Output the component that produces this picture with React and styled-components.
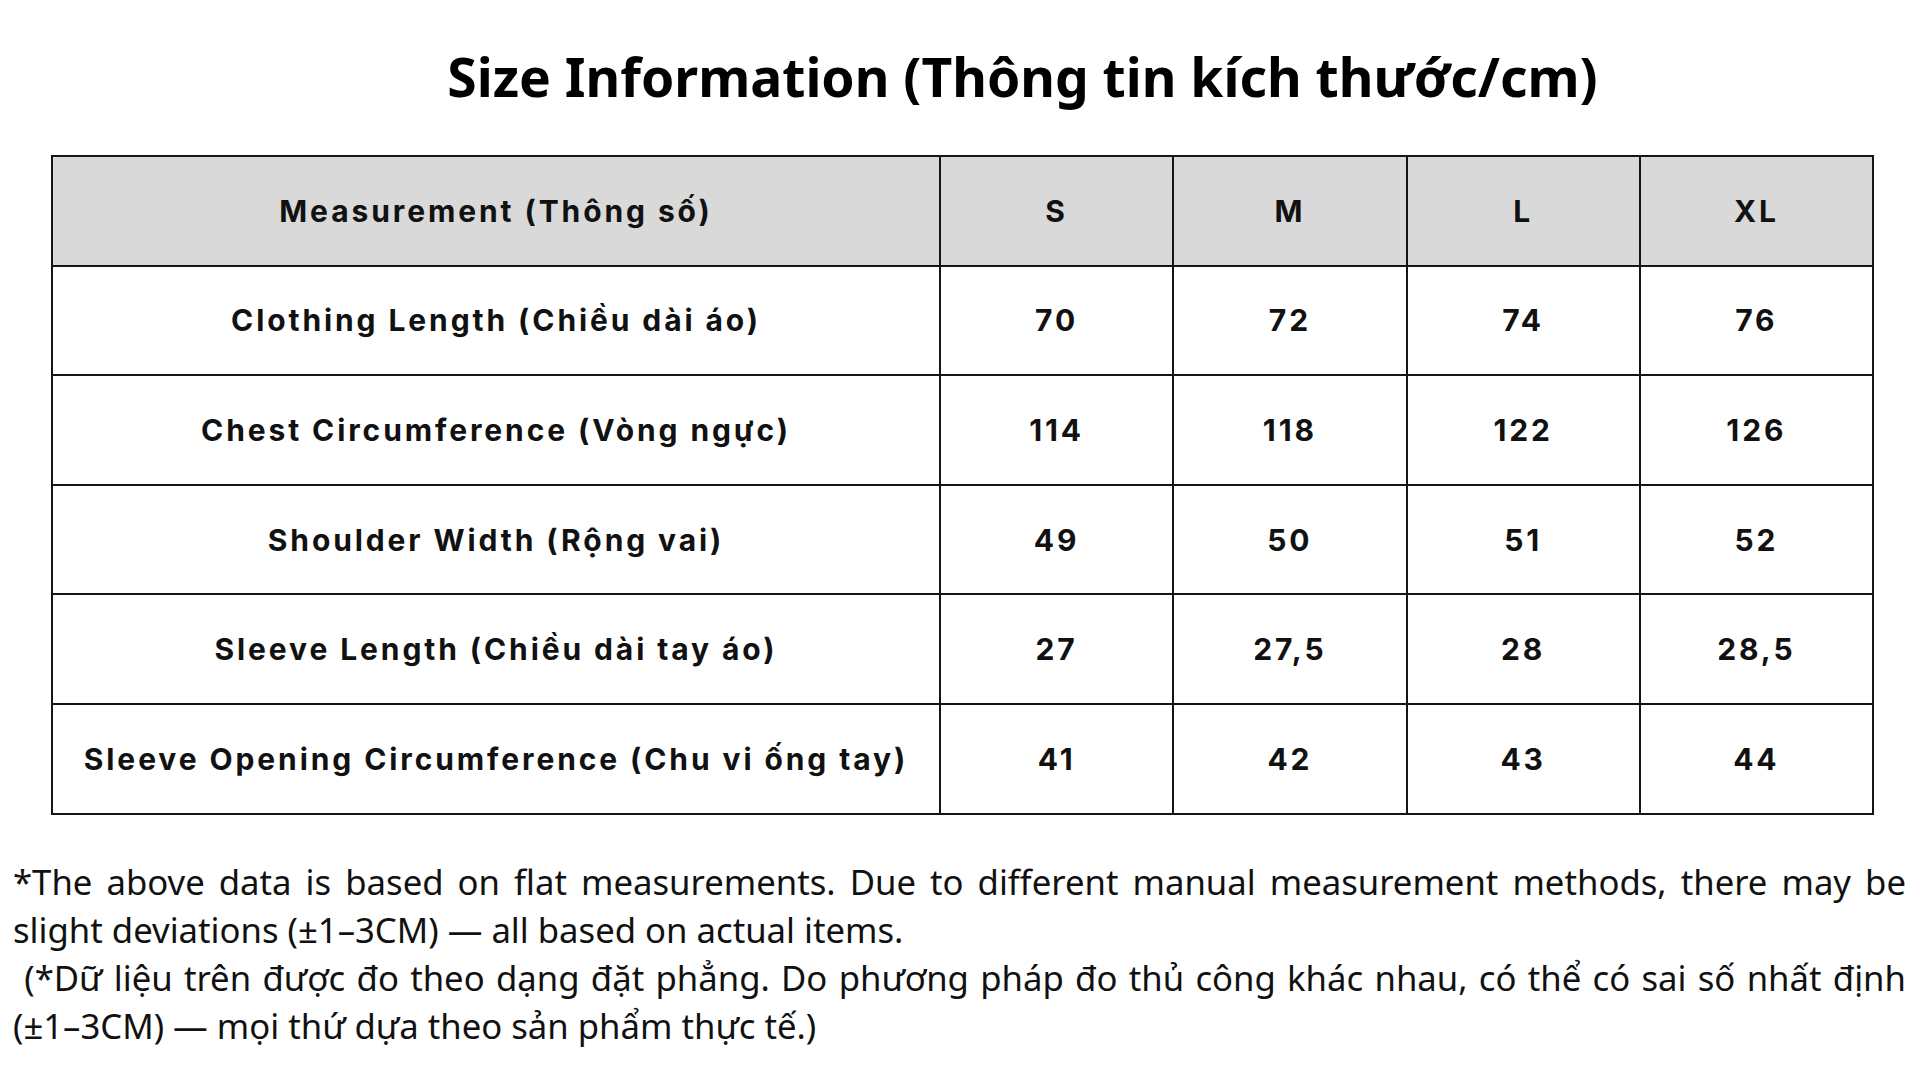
import styled, { createGlobalStyle } from "styled-components";

const GlobalStyle = createGlobalStyle`
  html, body {
    margin: 0;
    padding: 0;
    background: #ffffff;
  }
  body {
    width: 1920px;
    height: 1080px;
    overflow: hidden;
  }
`;

const StyledPage = styled.div`
  padding: 0 14px 0 13px;
  box-sizing: border-box;
  width: 1920px;
  color: #000;
`;

const StyledTitle = styled.h1`
  margin: 0;
  padding: 44px 0 0 126px;
  height: 155px;
  box-sizing: border-box;
  text-align: center;
  font-family: "Noto Sans", "Open Sans", sans-serif;
  font-weight: 700;
  font-size: 53.4px;
  line-height: 65px;
`;

const StyledTable = styled.table`
  border-collapse: collapse;
  margin: 0 32px 0 38px;
  width: calc(100% - 70px);
  table-layout: fixed;
  font-family: Inter, "Noto Sans", sans-serif;
  font-weight: 700;
  font-size: 30px;
  color: #111;
`;

const StyledCell = styled.td`
  border: 2px solid #151515;
  height: 107.6px;
  padding: 0;
  text-align: center;
  vertical-align: middle;
  background-color: ${(props) => (props.$head ? "#d9d9d9" : "#ffffff")};
  letter-spacing: 2.9px;
`;

const StyledNote = styled.p`
  margin: 0;
  padding-top: 43px;
  font-family: "Noto Sans", "Open Sans", sans-serif;
  font-size: 34.7px;
  line-height: 48px;
  text-align: justify;
  color: #111;
`;

const sizes = ["S", "M", "L", "XL"];

const rows = [
  { name: "Clothing Length (Chiều dài áo)", values: ["70", "72", "74", "76"] },
  { name: "Chest Circumference (Vòng ngực)", values: ["114", "118", "122", "126"] },
  { name: "Shoulder Width (Rộng vai)", values: ["49", "50", "51", "52"] },
  { name: "Sleeve Length (Chiều dài tay áo)", values: ["27", "27,5", "28", "28,5"] },
  {
    name: "Sleeve Opening Circumference (Chu vi ống tay)",
    values: ["41", "42", "43", "44"],
  },
];

const App = () => {
  return (
    <>
      <GlobalStyle />
      <StyledPage>
        <StyledTitle>Size Information (Thông tin kích thước/cm)</StyledTitle>

        <StyledTable>
          <colgroup>
            <col style={{ width: "888px" }} />
            <col />
            <col />
            <col />
            <col />
          </colgroup>
          <thead>
            <tr>
              <StyledCell as="th" $head>
                Measurement (Thông số)
              </StyledCell>
              {sizes.map((size) => (
                <StyledCell as="th" $head key={size}>
                  {size}
                </StyledCell>
              ))}
            </tr>
          </thead>
          <tbody>
            {rows.map((row) => (
              <tr key={row.name}>
                <StyledCell>{row.name}</StyledCell>
                {row.values.map((value, i) => (
                  <StyledCell key={i}>{value}</StyledCell>
                ))}
              </tr>
            ))}
          </tbody>
        </StyledTable>

        <StyledNote>
          *The above data is based on flat measurements. Due to different manual
          measurement methods, there may be slight deviations (±1–3CM) — all
          based on actual items.
          <br />
          &nbsp;(*Dữ liệu trên được đo theo dạng đặt phẳng. Do phương pháp đo
          thủ công khác nhau, có thể có sai số nhất định (±1–3CM) — mọi thứ dựa
          theo sản phẩm thực tế.)
        </StyledNote>
      </StyledPage>
    </>
  );
};

export default App;
